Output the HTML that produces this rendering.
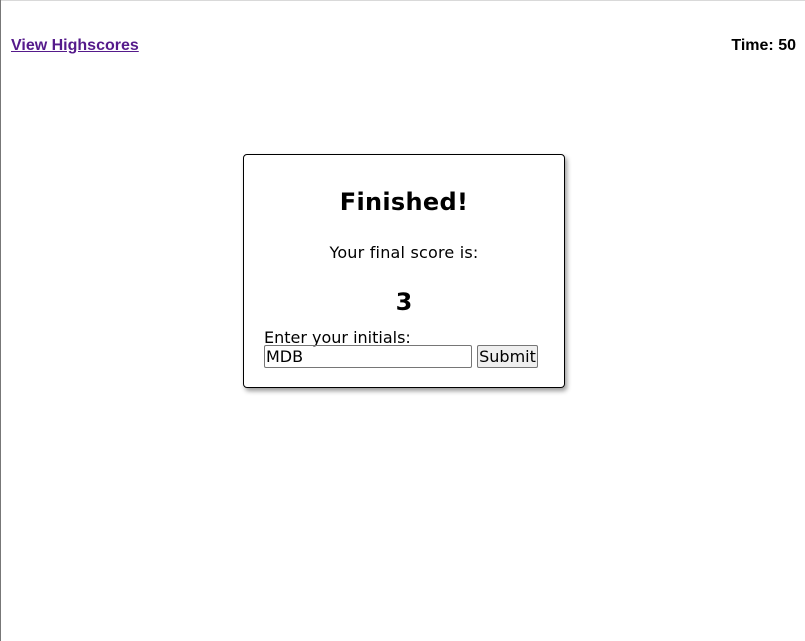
<!DOCTYPE html>
<html><head><style>
body{margin:0;width:805px;height:641px;background:#fff;position:relative;overflow:hidden;font-family:"DejaVu Sans",sans-serif;}
.top{position:absolute;left:0;top:0;width:805px;height:1px;background:#d9d9d9}
.left{position:absolute;left:0;top:0;width:1px;height:641px;background:#777}
a{position:absolute;left:11px;top:37px;font:bold 16px "Liberation Sans",Arial,sans-serif;color:#551a8b;text-decoration:underline}
.time{position:absolute;right:9px;top:37px;font:bold 16px "Liberation Sans",Arial,sans-serif;color:#000}
.card{position:absolute;left:243px;top:154px;width:320px;height:232px;border:1px solid #000;border-radius:4px;box-shadow:2px 3px 5px rgba(0,0,0,.4);}
.t{position:absolute;left:0;width:100%;text-align:center;color:#000}
.h{top:188px;font-weight:bold;font-size:24px;letter-spacing:0.3px}
.s{top:243px;font-size:16px;letter-spacing:0.2px}
.n{top:288px;font-weight:bold;font-size:24px}
.lab{position:absolute;left:264px;top:328px;font-size:16px}
.inp{position:absolute;left:264px;top:345px;border:1px solid #767676;border-radius:2px;font-size:16px;line-height:21px;box-sizing:border-box;width:208px;height:23px;padding-left:1px}
.btn{position:absolute;left:477px;top:345px;width:61px;height:23px;box-sizing:border-box;border:1px solid #767676;border-radius:2px;background:#efefef;font-size:16px;line-height:21px;text-align:center}
</style></head><body>
<div class="top"></div><div class="left"></div>
<a>View Highscores</a>
<div class="time">Time: 50</div>
<div class="card"></div>
<div class="t h" style="left:243px;width:322px">Finished!</div>
<div class="t s" style="left:243px;width:322px">Your final score is:</div>
<div class="t n" style="left:243px;width:322px">3</div>
<div class="lab">Enter your initials:</div>
<div class="inp">MDB</div>
<div class="btn">Submit</div>
</body></html>
